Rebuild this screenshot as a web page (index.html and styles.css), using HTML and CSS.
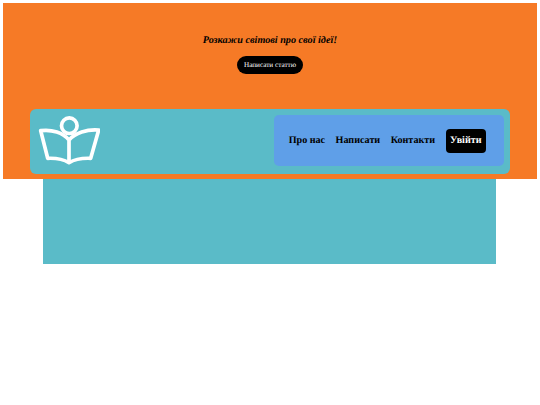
FILE: index.html
```html
<!DOCTYPE html>
<html lang="uk">
<head>
  <meta charset="UTF-8" />
  <meta name="viewport" content="width=device-width, initial-scale=1" />
  <title>Блог</title>
  <link rel="stylesheet" href="styles.css">
</head>
<body>

  <section class="hero">
    <div class="hero-text">
      <h2>Розкажи світові про свої ідеї!</h2>
      <a class="write-btn" href="#">Написати статтю</a>
    </div>

    <header class="topbar">
      <svg class="logo" viewBox="0 0 62 52" aria-label="Логотип">
        <circle cx="31.3" cy="11.7" r="7.8" />
        <path d="M31 26 C25 19 14 15 2.7 16.7 L9.7 44.3 C17 44 25 45 31 48.7 C37 45 45 44 52.7 44.3 L60.7 16 C49 15 37 19 31 26 Z M31 26 V48.7" />
      </svg>
      <nav class="menu">
        <a href="#">Про нас</a>
        <a href="#">Написати</a>
        <a href="#">Контакти</a>
        <a class="login" href="#">Увійти</a>
      </nav>
    </header>
  </section>

  <main class="content"></main>

</body>
</html>
```

FILE: styles.css
```css
html, body {
  margin: 0;
  padding: 0;
}

body {
  padding: 3px;
  font-family: "Liberation Serif", "Times New Roman", serif;
  text-rendering: geometricPrecision;
  background: #fff;
  color: #000;
}

/* Orange top block */
.hero {
  background: #f67a26;
  height: 176px;
  box-sizing: border-box;
  padding: 31px 27px 0 27px;
  display: flex;
  flex-direction: column;
}

.hero-text {
  height: 75px;
  text-align: center;
}

.hero-text h2 {
  margin: 0 0 7px 0;
  font-size: 10.2px;
  line-height: 13px;
  font-style: italic;
  font-weight: bold;
}

.write-btn {
  display: inline-block;
  background: #000;
  color: #fff;
  font-size: 7.2px;
  line-height: 18px;
  padding: 0 6.5px;
  border-radius: 9px;
  text-decoration: none;
}

/* Teal bar with logo and menu */
.topbar {
  background: #5abbc8;
  height: 65px;
  box-sizing: border-box;
  border-radius: 6px;
  display: flex;
  justify-content: space-between;
  align-items: flex-start;
  padding: 5px 6px 0 8px;
}

.logo {
  width: 62px;
  height: 52px;
  fill: none;
  stroke: #fff;
  stroke-width: 3.7;
  stroke-linejoin: round;
}

.menu {
  width: 230px;
  height: 51px;
  margin-top: 1px;
  box-sizing: border-box;
  padding-right: 18px;
  background: #5f9fe8;
  border-radius: 5px;
  display: flex;
  align-items: center;
  justify-content: flex-end;
  gap: 10.5px;
}

.menu a {
  color: #000;
  font-size: 10.1px;
  font-weight: bold;
  text-decoration: none;
}

.menu .login {
  background: #000;
  color: #fff;
  line-height: 24px;
  padding: 0 4.5px;
  border-radius: 4px;
}

/* Teal block below */
.content {
  width: 453px;
  height: 85px;
  margin-left: 40px;
  background: #5abbc8;
}
```
